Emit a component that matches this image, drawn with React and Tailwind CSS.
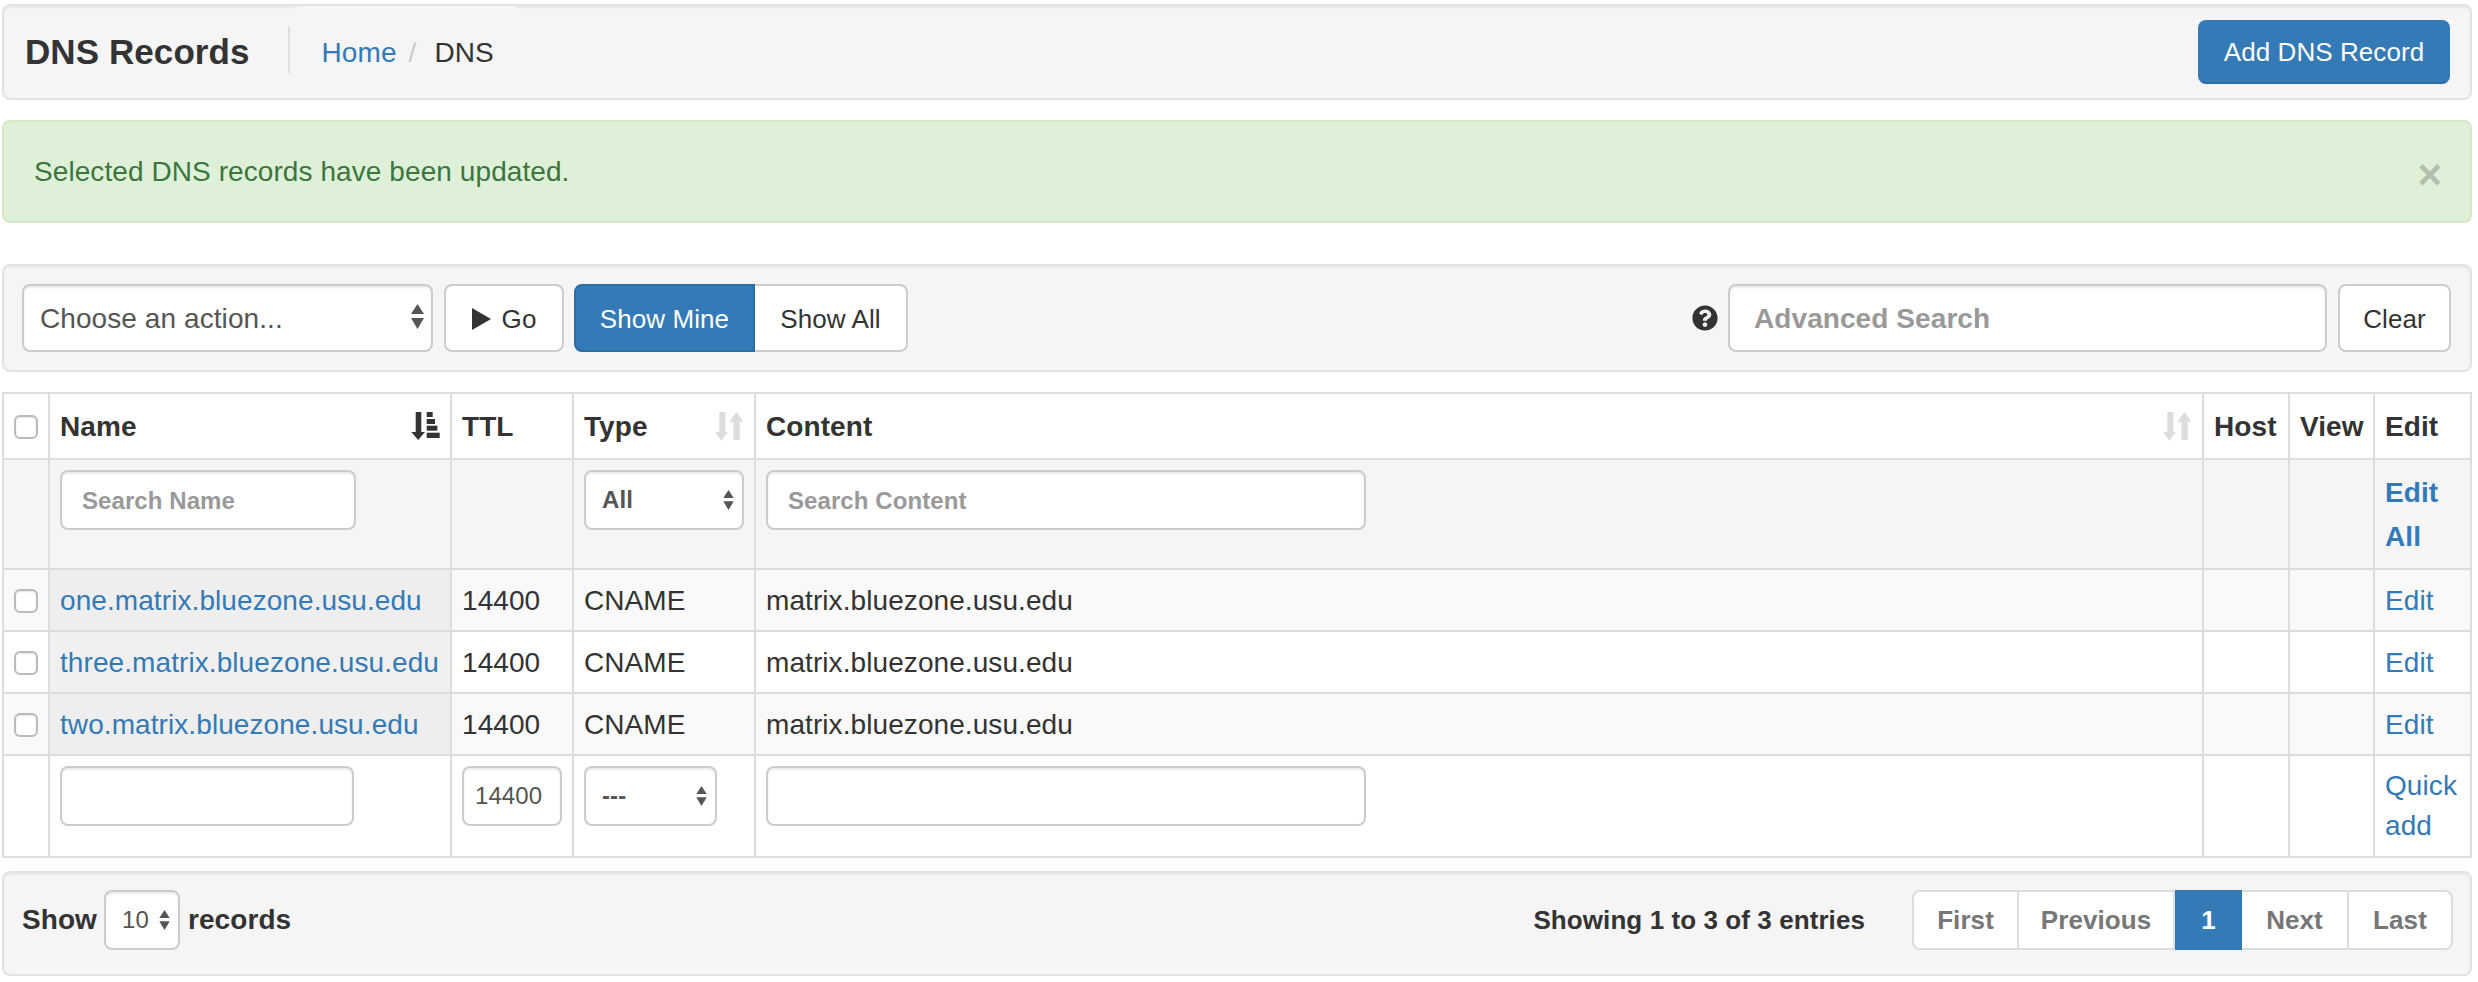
import React from 'react';
import { FaQuestionCircle } from 'react-icons/fa';

const panel = "bg-[#f5f5f5] border-2 border-[#e3e3e3] rounded-lg shadow-[inset_0_2px_2px_rgba(0,0,0,0.05)]";
const btnDefault = "flex items-center justify-center bg-white border-2 border-[#ccc] rounded-lg text-[26px] text-[#333] h-[68px] pt-[2px]";
const field = "bg-white border-2 border-[#ccc] rounded-lg shadow-[inset_0_2px_2px_rgba(0,0,0,0.075)] outline-none";
const cell = "border-2 border-[#ddd] px-[10px] py-[10px] align-top";
const textCell = "border-2 border-[#ddd] px-[10px] pt-[11px] pb-[9px] align-top";
const checkCell = "border-2 border-[#ddd] px-[10px] pt-[12px] pb-[10px] align-middle";
const headCell = "relative border-2 border-[#ddd] px-[10px] pt-[13px] pb-[11px] text-left font-bold align-middle";

const rows = [
  { name: "one.matrix.bluezone.usu.edu", odd: true },
  { name: "three.matrix.bluezone.usu.edu", odd: false },
  { name: "two.matrix.bluezone.usu.edu", odd: true },
];

const SelectArrows = ({ className }) => (
  <svg className={className} viewBox="0 0 13 25" fill="#555">
    <polygon points="6.5,0 13,10 0,10" />
    <polygon points="0,14 13,14 6.5,25" />
  </svg>
);

const SortDesc = () => (
  <svg className="absolute right-[9px] top-[17px] w-[30px] h-[30px]" viewBox="0 0 30 30" fill="#333">
    <polygon points="4.7,1 10.3,1 10.3,21 14,21 7.2,29 0.3,21 4.7,21" />
    <rect x="15.7" y="1" width="6" height="5" />
    <rect x="15.7" y="8" width="8.3" height="5" />
    <rect x="15.7" y="14.7" width="10.7" height="5" />
    <rect x="15.7" y="21.7" width="13" height="5.3" />
  </svg>
);

const SortNone = () => (
  <svg className="absolute right-[9px] top-[17px] w-[30px] h-[30px]" viewBox="0 0 30 30" fill="#ddd">
    <polygon points="4.3,1 10.3,1 10.3,21 12.7,21 6.4,29.7 0,21 4.3,21" />
    <polygon points="18.3,29 24.7,29 24.7,10.7 28.3,10.7 21.4,0.7 14.3,10.7 18.3,10.7" />
  </svg>
);

const Checkbox = () => (
  <input
    type="checkbox"
    className="block appearance-none w-[24px] h-[24px] bg-white border-2 border-[#bbb] rounded-md shadow-[inset_0_1px_2px_rgba(0,0,0,0.1)]"
  />
);

const App = () => {
  return (
    <div className="w-[2470px] ml-[2px] pt-[4px] font-['Liberation_Sans',sans-serif] text-[28px] leading-[40px] tracking-[0.08px] text-[#333] bg-white">
      {/* page header */}
      <div className={`${panel} relative h-[96px] flex items-center pl-[21px] pr-[20px]`}>
        <div className="absolute left-[288px] top-0 w-[228px] h-[8px] bg-[#f5f5f5] rounded-t-lg"></div>
        <h1 className="text-[35px] font-bold">DNS Records</h1>
        <div className="w-[2px] h-[46px] bg-[#ddd] ml-[38px] -mt-[4px]"></div>
        <div className="flex items-center ml-[32px] mt-[2px]">
          <a className="text-[#337ab7]">Home</a>
          <span className="text-[#ccc] ml-[12px]">/</span>
          <span className="ml-[18px]">DNS</span>
        </div>
        <button className="ml-auto w-[252px] h-[64px] bg-[#337ab7] border-2 border-[#337ab7] border-b-[#2e6da4] rounded-lg text-white text-[26px]">
          Add DNS Record
        </button>
      </div>

      {/* alert */}
      <div className="mt-[20px] h-[103px] flex items-center justify-between bg-[#dff0d8] border-2 border-[#d6e9c6] rounded-lg pl-[30px] pr-[28px] text-[#3c763d]">
        <span className="mt-[1px]">Selected DNS records have been updated.</span>
        <span className="text-[42px] font-bold text-black opacity-20 mt-[6px]">×</span>
      </div>

      {/* action bar */}
      <div className={`${panel} mt-[41px] h-[108px] flex items-center pl-[18px] pr-[19px]`}>
        <div className="relative w-[411px]">
          <select className={`${field} appearance-none w-full h-[68px] pl-[16px] pt-[2px] text-[#555]`}>
            <option>Choose an action...</option>
          </select>
          <SelectArrows className="absolute right-[9px] top-[20px] w-[13px] h-[25px]" />
        </div>
        <button className={`${btnDefault} w-[120px] ml-[11px]`}>
          <svg className="w-[19px] h-[22px] mr-[11px]" viewBox="0 0 19 22" fill="#333">
            <polygon points="0,0 19,11 0,22" />
          </svg>
          Go
        </button>
        <div className="flex ml-[10px]">
          <button className="w-[181px] h-[68px] pt-[2px] bg-[#337ab7] border-2 border-[#2e6da4] rounded-l-lg text-white text-[26px]">Show Mine</button>
          <button className={`${btnDefault} w-[153px] border-l-0 rounded-l-none`}>Show All</button>
        </div>
        <FaQuestionCircle className="ml-auto w-[26px] h-[26px] text-[#333]" />
        <input
          className={`${field} w-[599px] h-[68px] ml-[10px] px-[24px] pt-[2px] placeholder:text-[#999] placeholder:font-bold`}
          placeholder="Advanced Search"
        />
        <button className={`${btnDefault} w-[113px] ml-[11px]`}>Clear</button>
      </div>

      {/* records table */}
      <table className="mt-[20px] w-[2470px] table-fixed border-collapse bg-white">
        <colgroup>
          <col className="w-[46px]" />
          <col className="w-[402px]" />
          <col className="w-[122px]" />
          <col className="w-[182px]" />
          <col className="w-[1448px]" />
          <col className="w-[86px]" />
          <col className="w-[85px]" />
          <col className="w-[97px]" />
        </colgroup>
        <thead>
          <tr>
            <th className={headCell}><Checkbox /></th>
            <th className={headCell}>Name<SortDesc /></th>
            <th className={headCell}>TTL</th>
            <th className={headCell}>Type<SortNone /></th>
            <th className={headCell}>Content<SortNone /></th>
            <th className={headCell}>Host</th>
            <th className={headCell}>View</th>
            <th className={headCell}>Edit</th>
          </tr>
        </thead>
        <tbody>
          <tr className="bg-[#f5f5f5]">
            <td className={cell}></td>
            <td className={cell}>
              <input
                className={`${field} block w-[296px] h-[60px] px-[20px] pt-[2px] text-[24px] placeholder:text-[#999] placeholder:font-bold`}
                placeholder="Search Name"
              />
            </td>
            <td className={cell}></td>
            <td className={cell}>
              <div className="relative w-[160px]">
                <select className={`${field} appearance-none block w-full h-[60px] pl-[16px] text-[24px] font-bold text-[#555]`}>
                  <option>All</option>
                </select>
                <SelectArrows className="absolute right-[10px] top-[20px] w-[11px] h-[20px]" />
              </div>
            </td>
            <td className={cell}>
              <input
                className={`${field} block w-[600px] h-[60px] px-[20px] pt-[2px] text-[24px] placeholder:text-[#999] placeholder:font-bold`}
                placeholder="Search Content"
              />
            </td>
            <td className={cell}></td>
            <td className={cell}></td>
            <td className={`${textCell} font-bold text-[#337ab7] leading-[44px]`}>Edit All</td>
          </tr>
          {rows.map((row) => (
            <tr key={row.name} className={row.odd ? "bg-[#f9f9f9]" : "bg-white"}>
              <td className={checkCell}><Checkbox /></td>
              <td className={`${textCell} whitespace-nowrap text-[#337ab7] ${row.odd ? "bg-[#eeeeee]" : "bg-[#f0f0f0]"}`}>{row.name}</td>
              <td className={textCell}>14400</td>
              <td className={textCell}>CNAME</td>
              <td className={textCell}>matrix.bluezone.usu.edu</td>
              <td className={cell}></td>
              <td className={cell}></td>
              <td className={`${textCell} text-[#337ab7]`}>Edit</td>
            </tr>
          ))}
          <tr>
            <td className={cell}></td>
            <td className={cell}>
              <input className={`${field} block w-[294px] h-[60px]`} />
            </td>
            <td className={cell}>
              <input className={`${field} block w-[100px] h-[60px] px-[11px] text-[24px] text-[#555]`} defaultValue="14400" />
            </td>
            <td className={cell}>
              <div className="relative w-[133px]">
                <select className={`${field} appearance-none block w-full h-[60px] pl-[16px] text-[24px] font-bold text-[#555]`}>
                  <option>---</option>
                </select>
                <SelectArrows className="absolute right-[10px] top-[20px] w-[11px] h-[20px]" />
              </div>
            </td>
            <td className={cell}>
              <input className={`${field} block w-[600px] h-[60px]`} />
            </td>
            <td className={cell}></td>
            <td className={cell}></td>
            <td className={`${cell} text-[#337ab7]`}>Quick add</td>
          </tr>
        </tbody>
      </table>

      {/* table footer */}
      <div className={`${panel} mt-[13px] h-[105px] flex items-center pl-[18px] pr-[17px] pb-[7px]`}>
        <span className="font-bold">Show</span>
        <div className="relative w-[76px] ml-[7px]">
          <select className={`${field} appearance-none block w-full h-[60px] pl-[16px] text-[24px] text-[#555]`}>
            <option>10</option>
          </select>
          <SelectArrows className="absolute right-[10px] top-[20px] w-[11px] h-[20px]" />
        </div>
        <span className="font-bold ml-[8px]">records</span>
        <span className="ml-auto font-bold text-[26px]">Showing 1 to 3 of 3 entries</span>
        <div className="flex ml-[47px] h-[60px] text-[26px] font-bold text-[#777]">
          <div className="w-[107px] flex items-center justify-center bg-white border-2 border-[#ddd] rounded-l-lg">First</div>
          <div className="w-[156px] flex items-center justify-center bg-white border-2 border-l-0 border-[#ddd]">Previous</div>
          <div className="w-[67px] flex items-center justify-center bg-[#337ab7] text-white">1</div>
          <div className="w-[107px] flex items-center justify-center bg-white border-2 border-l-0 border-[#ddd]">Next</div>
          <div className="w-[104px] flex items-center justify-center bg-white border-2 border-l-0 border-[#ddd] rounded-r-lg">Last</div>
        </div>
      </div>
    </div>
  );
};

export default App;
